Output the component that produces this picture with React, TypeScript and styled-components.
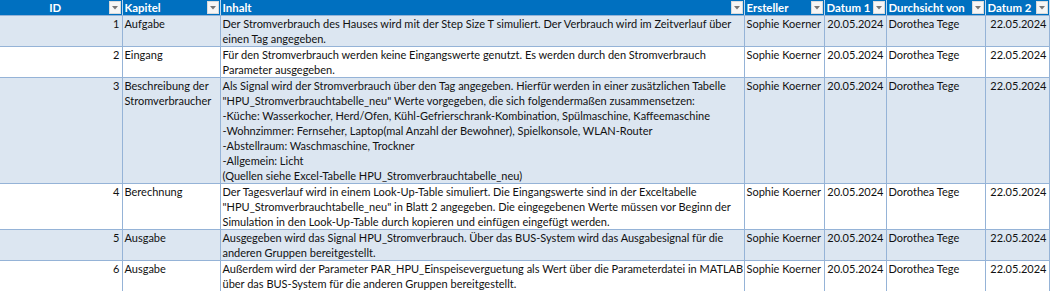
import React, { FC } from "react";
import styled, { createGlobalStyle } from "styled-components";

const GlobalStyle = createGlobalStyle`
  html, body {
    margin: 0;
    padding: 0;
    background: #ffffff;
  }
  body {
    font-family: "Lato", "Liberation Sans", sans-serif;
  }
`;

const Sheet = styled.table`
  border-collapse: collapse;
  table-layout: fixed;
  width: 1049px;
  font-family: "Lato", "Liberation Sans", sans-serif;
  font-size: 11px;
  color: #111;
`;

const HeadCell = styled.th`
  height: 15px;
  padding: 0;
  background: #0070c0;
  color: #fff;
  font-weight: 700;
  font-size: 11.4px;
  text-align: left;
  border-right: 1px solid #bdd7ee;
  border-bottom: 1px solid #95b3d7;
`;

const HeadInner = styled.div`
  display: flex;
  align-items: center;
  height: 15px;
  padding-left: 2px;
`;

const HeadLabel = styled.span`
  flex: 1;
  text-align: ${({ $center }) => ($center ? "center" : "left")};
  white-space: nowrap;
  overflow: hidden;
  line-height: 15px;
`;

const FilterButton = styled.span`
  flex-shrink: 0;
  width: 12px;
  height: 13px;
  margin-right: 1px;
  background: #f6f6f6;
  border: 1px solid #dadada;
  box-sizing: border-box;
  display: flex;
  align-items: center;
  justify-content: center;
`;

const Row = styled.tr`
  background: ${({ $band }) => ($band ? "#dce6f1" : "#ffffff")};
`;

const Cell = styled.td`
  padding: 0 2px;
  vertical-align: top;
  line-height: 15px;
  white-space: nowrap;
  overflow: hidden;
  text-align: ${({ $right }) => ($right ? "right" : "left")};
  border-right: 1px solid #95b3d7;
  border-bottom: 1px solid #95b3d7;
`;

const Line = styled.div`
  height: 15px;
`;

const Arrow: FC = () => (
  <svg width="6" height="4" viewBox="0 0 6 4">
    <path d="M0 0 L6 0 L3 3.5 Z" fill="#777" />
  </svg>
);

const columns = [
  { label: "ID", width: 122, center: true },
  { label: "Kapitel", width: 98 },
  { label: "Inhalt", width: 524 },
  { label: "Ersteller", width: 80 },
  { label: "Datum 1", width: 62 },
  { label: "Durchsicht von", width: 99 },
  { label: "Datum 2", width: 64 },
];

const rows = [
  {
    id: 1,
    kapitel: ["Aufgabe"],
    inhalt: [
      "Der Stromverbrauch des Hauses wird mit der Step Size T simuliert. Der Verbrauch wird im Zeitverlauf über",
      "einen Tag angegeben.",
    ],
  },
  {
    id: 2,
    kapitel: ["Eingang"],
    inhalt: [
      "Für den Stromverbrauch werden keine Eingangswerte genutzt. Es werden durch den Stromverbrauch",
      "Parameter ausgegeben.",
    ],
  },
  {
    id: 3,
    kapitel: ["Beschreibung der", "Stromverbraucher"],
    inhalt: [
      "Als Signal wird der Stromverbrauch über den Tag angegeben. Hierfür werden in einer zusätzlichen Tabelle",
      "\"HPU_Stromverbrauchtabelle_neu\" Werte vorgegeben, die sich folgendermaßen zusammensetzen:",
      "-Küche: Wasserkocher, Herd/Ofen, Kühl-Gefrierschrank-Kombination, Spülmaschine, Kaffeemaschine",
      "-Wohnzimmer: Fernseher, Laptop(mal Anzahl der Bewohner), Spielkonsole, WLAN-Router",
      "-Abstellraum: Waschmaschine, Trockner",
      "-Allgemein: Licht",
      "(Quellen siehe Excel-Tabelle HPU_Stromverbrauchtabelle_neu)",
    ],
  },
  {
    id: 4,
    kapitel: ["Berechnung"],
    inhalt: [
      "Der Tagesverlauf wird in einem Look-Up-Table simuliert. Die Eingangswerte sind in der Exceltabelle",
      "\"HPU_Stromverbrauchtabelle_neu\" in Blatt 2 angegeben. Die eingegebenen Werte müssen vor Beginn der",
      "Simulation in den Look-Up-Table durch kopieren und einfügen eingefügt werden.",
    ],
  },
  {
    id: 5,
    kapitel: ["Ausgabe"],
    inhalt: [
      "Ausgegeben wird das Signal HPU_Stromverbrauch. Über das BUS-System wird das Ausgabesignal für die",
      "anderen Gruppen bereitgestellt.",
    ],
  },
  {
    id: 6,
    kapitel: ["Ausgabe"],
    inhalt: [
      "Außerdem wird der Parameter PAR_HPU_Einspeiseverguetung als Wert über die Parameterdatei in MATLAB",
      "über das BUS-System für die anderen Gruppen bereitgestellt.",
    ],
  },
];

const Lines: FC<{ lines: string[] }> = ({ lines }) => (
  <>
    {lines.map((l, i) => (
      <Line key={i}>{l}</Line>
    ))}
  </>
);

const App: FC = () => (
  <>
    <GlobalStyle />
    <Sheet>
      <colgroup>
        {columns.map((c) => (
          <col key={c.label} style={{ width: c.width }} />
        ))}
      </colgroup>
      <thead>
        <tr>
          {columns.map((c) => (
            <HeadCell key={c.label}>
              <HeadInner>
                <HeadLabel $center={c.center}>{c.label}</HeadLabel>
                <FilterButton>
                  <Arrow />
                </FilterButton>
              </HeadInner>
            </HeadCell>
          ))}
        </tr>
      </thead>
      <tbody>
        {rows.map((r, i) => (
          <Row key={r.id} $band={i % 2 === 0}>
            <Cell $right>{r.id}</Cell>
            <Cell>
              <Lines lines={r.kapitel} />
            </Cell>
            <Cell>
              <Lines lines={r.inhalt} />
            </Cell>
            <Cell>Sophie Koerner</Cell>
            <Cell $right>20.05.2024</Cell>
            <Cell>Dorothea Tege</Cell>
            <Cell $right>22.05.2024</Cell>
          </Row>
        ))}
      </tbody>
    </Sheet>
  </>
);

export default App;
